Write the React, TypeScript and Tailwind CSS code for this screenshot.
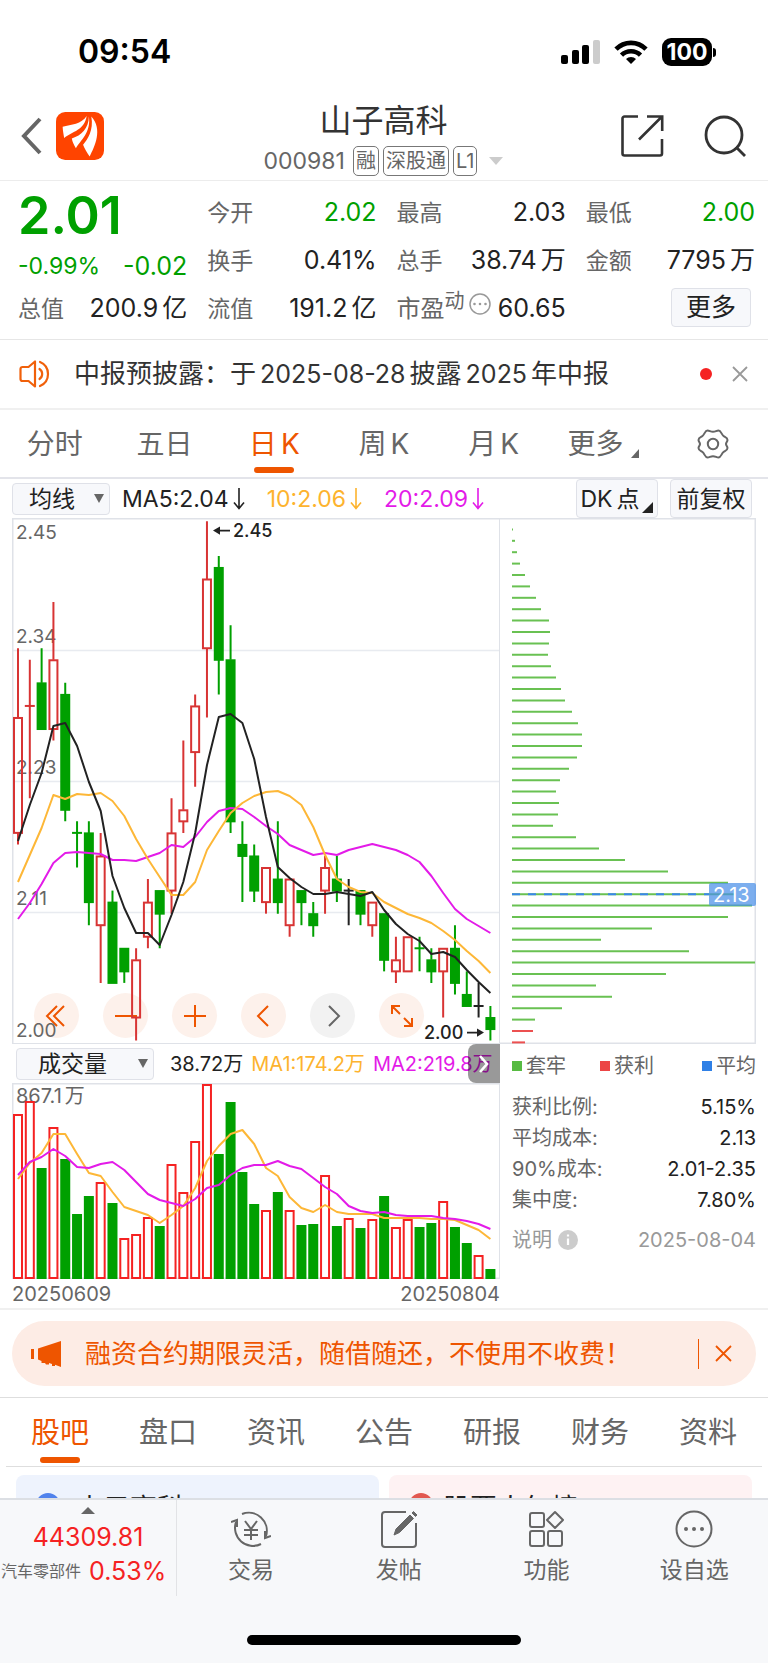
import React from 'react';
import clsx from 'clsx';

type Tone = 'up' | 'down' | 'flat';

// [tone, high, body top, body bottom, low] in cents
type Candle = [Tone, number, number, number, number];

const candles: Candle[] = [
  ['up', 234, 228, 218, 217],
  ['up', 233, 229, 229, 221],
  ['down', 234, 231, 227, 227],
  ['up', 238, 233, 227, 226],
  ['down', 231, 230, 220, 219],
  ['down', 219, 218, 218, 215],
  ['down', 219, 218, 212, 210],
  ['up', 218, 216, 210, 205],
  ['down', 213, 212, 205, 205],
  ['down', 208, 208, 206, 205],
  ['up', 208, 207, 202, 200],
  ['up', 214, 212, 209, 208],
  ['down', 213, 213, 211, 208],
  ['up', 221, 218, 213, 211],
  ['up', 226, 220, 219, 218],
  ['up', 230, 229, 225, 222],
  ['up', 245, 240, 234, 228],
  ['down', 242, 241, 233, 230],
  ['down', 236, 233, 219, 218],
  ['down', 219, 217, 216, 212],
  ['down', 217, 216, 213, 212],
  ['up', 215, 215, 212, 211],
  ['down', 219, 214, 212, 211],
  ['up', 214, 214, 210, 209],
  ['down', 213, 213, 212, 210],
  ['down', 212, 211, 210, 209],
  ['up', 216, 215, 213, 211],
  ['down', 216, 214, 213, 212],
  ['flat', 214, 213, 213, 210],
  ['down', 213, 213, 211, 210],
  ['up', 212, 212, 210, 209],
  ['down', 211, 211, 207, 206],
  ['up', 209, 207, 206, 205],
  ['up', 209, 209, 206, 206],
  ['down', 209, 208, 208, 206],
  ['down', 208, 207, 206, 205],
  ['up', 208, 208, 206, 202],
  ['down', 210, 208, 205, 204],
  ['down', 206, 204, 203, 203],
  ['flat', 205, 203, 203, 202],
  ['down', 203, 202, 201, 200],
];

const ma5 = [323, 287, 255, 208, 205, 228, 264, 293, 358, 390, 415, 415, 427, 397, 364, 315, 247, 199, 196, 205, 241, 299, 349, 360, 369, 376, 376, 374, 376, 378, 374, 392, 406, 416, 423, 436, 434, 439, 452, 464, 475];
const ma10 = [364, 337, 310, 277, 281, 276, 277, 275, 283, 298, 321, 341, 359, 377, 377, 364, 332, 313, 295, 285, 278, 274, 273, 278, 287, 309, 337, 361, 369, 374, 375, 384, 390, 396, 400, 405, 413, 422, 433, 443, 455];
const ma20 = [401, 385, 366, 345, 335, 334, 335, 336, 342, 342, 343, 339, 335, 327, 329, 319, 304, 293, 290, 291, 299, 308, 316, 327, 332, 337, 335, 337, 332, 329, 326, 329, 332, 337, 344, 358, 375, 391, 401, 408, 415];

const volumes = [165, 178, 111, 152, 120, 65, 83, 97, 76, 41, 45, 62, 53, 115, 87, 138, 195, 125, 177, 107, 75, 69, 87, 69, 54, 55, 104, 53, 61, 51, 60, 83, 52, 60, 52, 56, 78, 52, 36, 24, 10];
const volMa1 = [96, 80, 70, 51, 51, 71, 90, 93, 109, 124, 128, 132, 140, 132, 123, 105, 78, 63, 51, 47, 61, 85, 93, 114, 125, 129, 122, 129, 131, 131, 131, 135, 135, 135, 135, 136, 136, 137, 142, 147, 156];
const volMa2 = [92, 79, 74, 66, 73, 84, 85, 81, 79, 87, 99, 111, 117, 120, 123, 116, 105, 102, 92, 85, 82, 82, 78, 83, 86, 95, 104, 111, 123, 128, 130, 129, 132, 133, 133, 133, 135, 136, 138, 141, 146];
const volUp = [0, 1, 3, 7, 9, 10, 11, 13, 14, 15, 16, 21, 23, 26, 28, 30, 32, 33, 36, 39];

const chips = [1, 3, 5, 8, 13, 18, 24, 29, 37, 38, 37, 36, 39, 44, 49, 53, 60, 66, 70, 70, 65, 57, 48, 44, 47, 46, 41, 64, 87, 113, 156, 216, 222, 240, 216, 140, 89, 177, 243, 154, 84, 100, 50, 23, 21, 13];

const toneColor = { up: '#d83434', down: '#00a000', flat: '#222222' };

const slotX = (i: number) => 6 + i * 11.81;
const priceY = (cents: number) => 3.3 + (245 - cents) * 11.54;
const toPoints = (ys: number[]) => ys.map((y, i) => `${slotX(i).toFixed(1)},${y}`).join(' ');

function StatusBar() {
  return (
    <div className="flex h-[100px] items-center justify-between pl-[78px] pr-[52px] pt-1 text-black">
      <span className="text-[32px] font-semibold leading-9">09:54</span>
      <div className="flex items-center gap-[14px]">
        <svg width="39" height="25" viewBox="0 0 39 25">
          <rect x="0" y="15" width="7" height="9" rx="2" />
          <rect x="11" y="10" width="7" height="14" rx="2" />
          <rect x="21" y="5" width="7" height="19" rx="2" />
          <rect x="32" y="0" width="7" height="24" rx="2" fill="#ccc" />
        </svg>
        <svg width="34" height="25" viewBox="0 0 34 25" fill="none" stroke="#000" strokeWidth="4.6">
          <path d="M2 9.2a21 21 0 0 1 30 0" />
          <path d="M7.5 15.2a13.4 13.4 0 0 1 19 0" />
          <path d="M17 24l-5-5a7 7 0 0 1 10 0z" fill="#000" stroke="none" />
        </svg>
        <div className="flex items-center gap-[1px]">
          <span className="flex h-7 w-[50px] items-center justify-center rounded-[9px] bg-black text-[23px] font-bold leading-7 text-white">100</span>
          <span className="h-[9px] w-[3px] rounded-r-full bg-black" />
        </div>
      </div>
    </div>
  );
}

function Tag({ children }: { children: React.ReactNode }) {
  return (
    <span className="flex h-[30px] items-center rounded-[5px] border border-[#777] px-[2px] text-[20px] leading-7">
      {children}
    </span>
  );
}

function Header() {
  return (
    <header className="flex h-[81px] items-center justify-between border-b border-[#ececec] pl-5 pr-[21px] text-[#333]">
      <div className="flex w-[130px] items-center gap-[14px] pb-2">
        <button aria-label="返回">
          <svg width="22" height="38" viewBox="0 0 22 38" fill="none" stroke="#666" strokeWidth="4">
            <path d="M20 2L4 19l16 17" />
          </svg>
        </button>
        <svg width="48" height="48" viewBox="0 0 47 47">
          <rect width="47" height="47" rx="9" fill="#ff4400" />
          <g fill="#fff">
            <path d="M30 4C25 12 15 12.500 6.500 14.500c.2 4 .8 7 1.500 11C16 19 28 18 30 4z" />
            <path d="M32.200 4.500C32 16 25 23 15.500 26c.5 3 2 6.500 4 9.500C24 28 34.500 20 32.200 4.500z" />
            <path d="M34.600 4.500C37 18 31 27 26.500 32c1.500 4 4 8 6.500 11.500C38 34 46 17 34.600 4.500z" />
          </g>
        </svg>
      </div>
      <div className="flex flex-col items-center">
        <h1 className="text-[32px] leading-9">山子高科</h1>
        <div className="mt-1.5 flex items-center gap-1 text-[#666]">
          <span className="mr-1 text-[23px] leading-8">000981</span>
          <Tag>融</Tag>
          <Tag>深股通</Tag>
          <Tag>L1</Tag>
          <svg className="ml-2" width="14" height="8" viewBox="0 0 14 8" fill="#ccc">
            <path d="M0 0h14L7 8z" />
          </svg>
        </div>
      </div>
      <div className="flex w-[130px] items-center justify-end gap-[40px] pb-2">
        <button aria-label="分享">
          <svg width="43" height="42" viewBox="0 0 43 42" fill="none" stroke="#333" strokeWidth="2.6">
            <path d="M17 1.500H3.500a2 2 0 0 0-2 2v35a2 2 0 0 0 2 2h35.500a2 2 0 0 0 2-2V24" />
            <path d="M26 1.500h15.200V16M41 1.500L18 24.500" />
          </svg>
        </button>
        <button aria-label="搜索">
          <svg width="43" height="42" viewBox="0 0 43 42" fill="none" stroke="#333" strokeWidth="2.800">
            <circle cx="20" cy="20" r="18" />
            <path d="M32 32l9 9" />
          </svg>
        </button>
      </div>
    </header>
  );
}

function Stat({ label, value, unit, green }: { label: string; value: string; unit?: string; green?: boolean }) {
  return (
    <div className="flex h-12 items-center justify-between">
      <span className="text-[23px] text-[#666]">{label}</span>
      <span className={clsx('text-[25px]', green ? 'text-[#00a000]' : 'text-[#222]')}>
        {value}
        {unit && <span className="ml-1">{unit}</span>}
      </span>
    </div>
  );
}

function Quote() {
  return (
    <section className="grid grid-cols-4 gap-5 border-b border-[#e6e6e6] pb-1.5 pl-[18px] pr-[13px] pt-2">
      <div className="whitespace-nowrap">
        <div className="flex h-24 flex-col justify-between pb-1 text-[#00a000]">
          <strong className="text-[52px] font-semibold leading-[54px]">2.01</strong>
          <div className="flex items-center justify-between text-[23px] leading-[30px]">
            <span>-0.99%</span>
            <span className="text-[25px]">-0.02</span>
          </div>
        </div>
        <Stat label="总值" value="200.9" unit="亿" />
      </div>
      <div>
        <Stat label="今开" value="2.02" green />
        <Stat label="换手" value="0.41%" />
        <Stat label="流值" value="191.2" unit="亿" />
      </div>
      <div>
        <Stat label="最高" value="2.03" />
        <Stat label="总手" value="38.74" unit="万" />
        <div className="flex h-12 items-center justify-between whitespace-nowrap">
          <span className="flex items-center text-2xl text-[#666]">
            市盈
            <span className="self-start text-[20px] leading-4">动</span>
            <svg className="mb-2.5 ml-1" width="22" height="22" viewBox="0 0 22 22" fill="none" stroke="#999" strokeWidth="1.500">
              <circle cx="11" cy="11" r="10" />
              <path d="M5.500 11h.01M11 11h.01M16.500 11h.01" strokeWidth="2.600" strokeLinecap="round" />
            </svg>
          </span>
          <span className="text-[25px] text-[#222]">60.65</span>
        </div>
      </div>
      <div>
        <Stat label="最低" value="2.00" green />
        <Stat label="金额" value="7795" unit="万" />
        <div className="flex h-12 items-center justify-end pb-1 pr-1">
          <button className="h-[39px] w-20 rounded border border-[#dfe1e8] bg-[#f7f8fb] text-[25px] leading-9 text-[#222]">更多</button>
        </div>
      </div>
    </section>
  );
}

function Notice() {
  return (
    <section className="flex h-[70px] items-center border-b-2 border-[#f0f0f0] pl-[19px] pr-5">
      <svg width="34" height="28" viewBox="0 0 34 28" fill="none" stroke="#f0600a" strokeWidth="2.200" strokeLinejoin="round">
        <path d="M16 1.500v25L9.500 21H3.500a2 2 0 0 1-2-2V9a2 2 0 0 1 2-2h6z" />
        <path d="M20.500 9a6 6 0 0 1 0 10M21 2a13 13 0 0 1 0 24" strokeLinecap="round" />
      </svg>
      <p className="ml-[21px] flex-1 whitespace-nowrap text-[26px] leading-9 text-[#333]">
        中报预披露：于<span className="mx-1 text-[25px]">2025-08-28</span>披露<span className="mx-1 text-[25px]">2025</span>年中报
      </p>
      <span className="h-3 w-3 rounded-full bg-[#f52222]" />
      <button aria-label="关闭公告" className="ml-5">
        <svg width="16" height="16" viewBox="0 0 16 16" stroke="#999" strokeWidth="1.800">
          <path d="M1 1l14 14M15 1L1 15" />
        </svg>
      </button>
    </section>
  );
}

const periods = ['分时', '五日', '日K', '周K', '月K', '更多'];

function PeriodTabs() {
  return (
    <nav className="grid h-[69px] grid-cols-7 border-b-2 border-[#e3e4ea] text-[28px] text-[#666]">
      {periods.map((name) => (
        <button
          key={name}
          className={clsx('relative flex items-center justify-center leading-10', name === '日K' && 'text-[#ee5500]')}
        >
          {name.endsWith('K') ? (
            <>
              {name[0]}
              <span className="ml-1">K</span>
            </>
          ) : (
            name
          )}
          {name === '更多' && (
            <svg className="ml-2 mt-5" width="8" height="9" viewBox="0 0 8 9" fill="#666">
              <path d="M8 0v9H0z" />
            </svg>
          )}
          {name === '日K' && <span className="absolute bottom-1 h-1.5 w-10 rounded-full bg-[#ee5500]" />}
        </button>
      ))}
      <button aria-label="设置" className="flex items-center justify-center">
        <svg width="32" height="30" viewBox="0 0 32 30" fill="none" stroke="#666" strokeWidth="2">
          <path d="M10.500 1.500c2 0 3 1.300 5.500 1.300s3.500-1.300 5.500-1.300c2.500 0 3 4 5 5.500 1.600 1.200 4 1.500 4 4 0 1.500-1.500 2.500-1.500 4s1.500 2.500 1.500 4c0 2.500-2.400 2.800-4 4-2 1.500-2.500 5.500-5 5.500-2 0-3-1.300-5.500-1.300s-3.500 1.300-5.500 1.300c-2.500 0-3-4-5-5.500-1.600-1.200-4-1.500-4-4 0-1.500 1.500-2.500 1.500-4s-1.500-2.500-1.500-4c0-2.500 2.400-2.800 4-4 2-1.500 2.500-5.500 5-5.500z" />
          <circle cx="16" cy="15" r="5.200" />
        </svg>
      </button>
    </nav>
  );
}

function Picker({ label, option, className }: { label: string; option: string; className: string }) {
  return (
    <span className="relative flex items-center">
      <select
        aria-label={label}
        className={clsx('h-8 appearance-none rounded border border-[#dfe1e8] bg-[#f7f8fb] leading-7 text-[#222]', className)}
      >
        <option>{option}</option>
      </select>
      <svg className="pointer-events-none absolute right-1.5" width="10" height="9" viewBox="0 0 10 9" fill="#666">
        <path d="M0 0h10L5 9z" />
      </svg>
    </span>
  );
}

function DownArrow() {
  return (
    <svg className="ml-1" width="12" height="22" viewBox="0 0 12 22" fill="none" stroke="currentColor" strokeWidth="1.600">
      <path d="M6 0v20.500M1 14.500l5 6 5-6" />
    </svg>
  );
}

function AverageBar() {
  return (
    <div className="flex h-[39px] items-center whitespace-nowrap px-3 text-[23px] leading-8">
      <Picker label="主图指标" option="均线" className="w-[98px] pl-4 text-[23px]" />
      <span className="ml-3 flex items-center text-[#222]">MA5:2.04<DownArrow /></span>
      <span className="ml-[22px] flex items-center text-[#fdb32e]">10:2.06<DownArrow /></span>
      <span className="ml-[22px] flex items-center text-[#e31be8]">20:2.09<DownArrow /></span>
      <div className="ml-auto flex gap-3 pr-1 text-[#222]">
        <button className="relative h-[39px] w-[82px] rounded border border-[#dfe1e8] bg-[#f7f8fb] pr-3.5">
          DK<span className="ml-1">点</span>
          <svg className="absolute bottom-1 right-1" width="11" height="11" viewBox="0 0 11 11" fill="#222">
            <path d="M11 0v11H0z" />
          </svg>
        </button>
        <button className="h-[39px] w-[82px] rounded border border-[#dfe1e8] bg-[#f7f8fb]">前复权</button>
      </div>
    </div>
  );
}

const tools = [
  { name: '最早', d: 'M21 11L11 21l10 10M28 11L18 21l10 10' },
  { name: '缩小', d: 'M10 21h22' },
  { name: '放大', d: 'M10 21h22M21 10v22' },
  { name: '左移', d: 'M25 11L15 21l10 10' },
  { name: '右移', d: 'M17 11l10 10-10 10', muted: true },
  { name: '全屏', d: 'M11 19v-8h8M11 11l8 8M31 23v8h-8M31 31l-8-8' },
];

function CandleChart() {
  return (
    <div className="relative">
      <div className="absolute bottom-1.5 left-[22px] flex gap-6">
        {tools.map((tool) => (
          <button
            key={tool.name}
            aria-label={tool.name}
            className={clsx('flex h-[45px] w-[45px] items-center justify-center rounded-full', tool.muted ? 'bg-[#f2f2f2] text-[#666]' : 'bg-[#fdf1eb] text-[#ee5500]')}
          >
            <svg width="42" height="42" viewBox="0 0 42 42" fill="none" stroke="currentColor" strokeWidth="2">
              <path d={tool.d} />
            </svg>
          </button>
        ))}
      </div>
      <svg className="pointer-events-none relative block w-full" viewBox="0 0 488 526" fontFamily="Inter, sans-serif">
        <g stroke="#e8ebf0" strokeWidth="1.500" fill="none">
          <path d="M0 132.500h488M0 263.500h488M0 394.500h488" />
          <rect x=".75" y=".75" width="487" height="525" stroke="#dfe2e8" />
        </g>
        <g fill="#666" fontSize="19">
          <text x="4" y="21">2.45</text>
          <text x="4" y="125">2.34</text>
          <text x="4" y="256">2.23</text>
          <text x="4" y="387">2.11</text>
          <text x="4" y="519">2.00</text>
        </g>
        {candles.map(([tone, high, top, bottom, low], i) => {
          const x = slotX(i);
          const color = toneColor[tone];
          const yTop = priceY(top);
          const yBottom = priceY(bottom);
          return (
            <g key={i} stroke={color} strokeWidth="2">
              <path d={`M${x} ${priceY(high)}V${yTop}M${x} ${yBottom}V${priceY(low)}`} />
              {top === bottom ? (
                <path d={`M${x - 5} ${yTop}h10`} />
              ) : (
                <rect x={x - 4} y={yTop + 0.5} width="8" height={yBottom - yTop - 0.5} fill={tone === 'up' ? 'none' : color} />
              )}
            </g>
          );
        })}
        <g fill="none" strokeWidth="2" strokeLinejoin="round">
          <polyline points={toPoints(ma20)} stroke="#e31be8" />
          <polyline points={toPoints(ma10)} stroke="#fdb737" />
          <polyline points={toPoints(ma5)} stroke="#222" />
        </g>
        <g fill="#222" fontSize="18" fontWeight="500">
          <path d="M201 12.500l7-4v3.200h10v1.800h-10v3.200z" />
          <text x="221" y="19">2.45</text>
          <text x="412" y="521">2.00</text>
          <path d="M472 514.500l-7-4v3.200h-10v1.800h10v3.200z" />
        </g>
      </svg>
    </div>
  );
}

function ChipChart() {
  return (
    <svg className="block w-full" viewBox="0 0 256 526" fontFamily="Inter, sans-serif">
      <path d="M0 .75h255.250v524.500H0" fill="none" stroke="#dfe2e8" strokeWidth="1.500" />
      {chips.map((w, i) => (
        <path key={i} d={`M12 ${(11.4 + i * 11.4).toFixed(1)}h${w}`} stroke={i > 43 ? '#ec5050' : '#69c152'} strokeWidth="2" />
      ))}
      <path d="M12 376.200h197" stroke="#3a86ea" strokeWidth="2" strokeDasharray="8 8" />
      <rect x="209" y="365" width="47" height="23" rx="2" fill="#4a8fe8" fillOpacity=".72" />
      <text x="213" y="384" fill="#fff" fontSize="20">2.13</text>
    </svg>
  );
}

function VolumePanel() {
  return (
    <div>
      <div className="relative flex h-[39px] items-center gap-2 whitespace-nowrap pl-1 text-[20px] leading-8">
        <Picker label="副图指标" option="成交量" className="w-[138px] pl-[21px] text-[23px]" />
        <span className="ml-2 text-[#222]">38.72万</span>
        <span className="text-[#fdb32e]">MA1:174.2万</span>
        <span className="text-[#e31be8]">MA2:219.8万</span>
        <button aria-label="下一个指标" className="absolute right-0 top-0 flex h-[39px] w-8 items-center justify-center rounded-l-lg bg-black/40">
          <svg width="12" height="18" viewBox="0 0 12 18" fill="none" stroke="#fff" strokeWidth="2.600">
            <path d="M2 1l7 8-7 8" />
          </svg>
        </button>
      </div>
      <svg className="block w-full" viewBox="0 0 488 196" fontFamily="Inter, 'Noto Sans CJK SC', sans-serif">
        <rect x=".75" y=".75" width="487" height="194.500" fill="none" stroke="#dfe2e8" strokeWidth="1.500" />
        <text x="4" y="20" fill="#666" fontSize="20">
          867.1<tspan dx="3">万</tspan>
        </text>
        {volumes.map((h, i) =>
          volUp.includes(i) ? (
            <rect key={i} x={slotX(i) - 4} y={197 - h} width="8" height={h - 2} fill="none" stroke="#f52222" strokeWidth="2" />
          ) : (
            <rect key={i} x={slotX(i) - 5} y={196 - h} width="10" height={h} fill="#00a000" />
          )
        )}
        <g fill="none" strokeWidth="2" strokeLinejoin="round">
          <polyline points={toPoints(volMa1)} stroke="#fdb737" />
          <polyline points={toPoints(volMa2)} stroke="#e31be8" />
        </g>
      </svg>
      <div className="flex h-[29px] items-center justify-between text-[20px] leading-7 text-[#666]">
        <span>20250609</span>
        <span>20250804</span>
      </div>
    </div>
  );
}

function Legend({ name, color }: { name: string; color: string }) {
  return (
    <span className="flex items-center gap-1 last:ml-auto">
      <i className={clsx('h-2.5 w-2.5', color)} />
      {name}
    </span>
  );
}

const costs = [
  ['获利比例:', '5.15%'],
  ['平均成本:', '2.13'],
  ['90%成本:', '2.01-2.35'],
  ['集中度:', '7.80%'],
];

function CostPanel() {
  return (
    <div className="whitespace-nowrap pl-3 text-[#666]">
      <div className="flex h-[44px] items-center gap-[34px] text-[20px]">
        <Legend name="套牢" color="bg-[#57bb42]" />
        <Legend name="获利" color="bg-[#ec4545]" />
        <Legend name="平均" color="bg-[#2f80e6]" />
      </div>
      <dl className="mt-1 text-[20px] leading-[31px]">
        {costs.map(([name, value]) => (
          <div key={name} className="flex justify-between">
            <dt>{name}</dt>
            <dd className="text-[#222]">{value}</dd>
          </div>
        ))}
      </dl>
      <div className="mt-2 flex items-center justify-between text-[20px] leading-8 text-[#999]">
        <span className="flex items-center gap-1.5">
          说明
          <svg width="20" height="20" viewBox="0 0 20 20">
            <circle cx="10" cy="10" r="10" fill="#ccc" />
            <path d="M10 8.500V15M10 4.500v2" stroke="#fff" strokeWidth="2.200" />
          </svg>
        </span>
        <span>2025-08-04</span>
      </div>
    </div>
  );
}

function Promo() {
  return (
    <section className="border-b border-[#dedede] px-3 py-[11px]">
      <div className="flex h-[65px] items-center rounded-full bg-[#fdece5] pl-[19px] pr-6 text-[#ee5500]">
        <svg width="32" height="26" viewBox="0 0 32 26" fill="#ee5500">
          <rect x="0" y="8" width="3" height="10" />
          <path d="M7 7.500L30 0v26l-6-2.200V25h-3v-2l-3-1v1.500h-3L14 22h-3.500v-2L7 18.500z" />
        </svg>
        <p className="ml-[22px] flex-1 whitespace-nowrap text-[26px] leading-9">融资合约期限灵活，随借随还，不使用不收费！</p>
        <span className="h-[30px] w-px bg-[#ee5500]" />
        <button aria-label="关闭广告" className="ml-4">
          <svg width="17" height="17" viewBox="0 0 17 17" stroke="#ee5500" strokeWidth="1.800">
            <path d="M1 1l15 15M16 1L1 16" />
          </svg>
        </button>
      </div>
    </section>
  );
}

const sections = ['股吧', '盘口', '资讯', '公告', '研报', '财务', '资料'];

function SectionTabs() {
  return (
    <nav className="mx-1.5 grid h-[69px] grid-cols-7 border-b border-[#dedede] text-[29px] text-[#666]">
      {sections.map((name, i) => (
        <button key={name} className={clsx('relative flex items-center justify-center pt-0.5 leading-10', i === 0 && 'text-[#ee5500]')}>
          {name}
          {i === 0 && <span className="absolute bottom-[3px] h-1.5 w-10 rounded-full bg-[#ee5500]" />}
        </button>
      ))}
    </nav>
  );
}

function BoardCards() {
  return (
    <div className="grid h-[31px] grid-cols-2 gap-2.5 overflow-hidden px-4 pt-2 text-[27px] leading-8 text-[#222]">
      <a href="#stock" className="flex h-20 gap-4 rounded-lg bg-[#eef3fd] pl-5 pt-[18px]">
        <span className="h-6 w-6 rounded-full bg-[#5082ec]" />
        <span>山子高科</span>
      </a>
      <a href="#rank" className="flex h-20 gap-2.5 rounded-lg bg-[#fef2f3] pl-5 pt-[18px]">
        <span className="h-6 w-6 rounded-full bg-[#e25850]" />
        <span>股票人气榜</span>
      </a>
    </div>
  );
}

const actions = [
  {
    name: '交易',
    icon: (
      <>
        <path d="M11 4a18 18 0 0 1 24 22M30 34A18 18 0 0 1 5 12M0 12l6-2v7M40 26l-6 2v-7" />
        <path d="M14 11l6 8 6-8M20 19v11M13 20h14M13 25h14" />
      </>
    ),
  },
  {
    name: '发帖',
    icon: (
      <>
        <path d="M27 2H6a3 3 0 0 0-3 3v29a3 3 0 0 0 3 3h28a3 3 0 0 0 3-3V13" />
        <path d="M15 25l2-6L31 5l3.500 3.500-14 14zM33 3l1.500-1.500L38 5l-1.500 1.500z" fill="#666" strokeWidth="1" />
      </>
    ),
  },
  {
    name: '功能',
    icon: (
      <>
        <rect x="4" y="3" width="14" height="14" rx="2" />
        <rect x="4" y="21" width="14" height="15" rx="2" />
        <rect x="22" y="21" width="14" height="15" rx="2" />
        <path d="M29 2l8 8-8 8-8-8z" strokeLinejoin="round" />
      </>
    ),
  },
  {
    name: '设自选',
    icon: (
      <>
        <circle cx="20" cy="19" r="17.500" />
        <path d="M12 19h.01M20 19h.01M28 19h.01" strokeWidth="4" strokeLinecap="round" />
      </>
    ),
  },
];

function BottomBar() {
  return (
    <footer className="border-t-2 border-[#dcdfe4] bg-[#f7f8fa]">
      <div className="flex h-24 whitespace-nowrap">
        <a href="#sector" className="flex w-[177px] flex-col items-center border-r border-[#e2e3e6] pt-[7px] text-[25px] leading-8 text-[#f52222]">
          <svg width="14" height="7" viewBox="0 0 14 7" fill="#666">
            <path d="M7 0l7 7H0z" />
          </svg>
          <span className="mt-[7px]">44309.81</span>
          <span className="flex w-full items-center gap-2 pl-px pt-0.5">
            <span className="text-base text-[#666]">汽车零部件</span>
            0.53%
          </span>
        </a>
        <nav className="grid flex-1 grid-cols-4">
          {actions.map((action) => (
            <button key={action.name} className="flex flex-col items-center pt-2.5 text-[23px] leading-8 text-[#666]">
              <svg width="40" height="38" viewBox="0 0 40 38" fill="none" stroke="#666" strokeWidth="2">
                {action.icon}
              </svg>
              <span className="mt-1.5">{action.name}</span>
            </button>
          ))}
        </nav>
      </div>
      <div className="flex h-[67px] justify-center pt-[39px]">
        <span className="h-2.5 w-[274px] rounded-full bg-black" />
      </div>
    </footer>
  );
}

export default function App() {
  return (
    <div className="bg-white font-[Inter,'Noto_Sans_CJK_SC',sans-serif]">
      <StatusBar />
      <Header />
      <Quote />
      <Notice />
      <PeriodTabs />
      <AverageBar />
      <main>
        <div className="grid grid-cols-[488fr_256fr] border-b-2 border-[#f0f0f0] px-3">
          <CandleChart />
          <ChipChart />
          <VolumePanel />
          <CostPanel />
        </div>
        <Promo />
        <SectionTabs />
        <BoardCards />
      </main>
      <BottomBar />
    </div>
  );
}
